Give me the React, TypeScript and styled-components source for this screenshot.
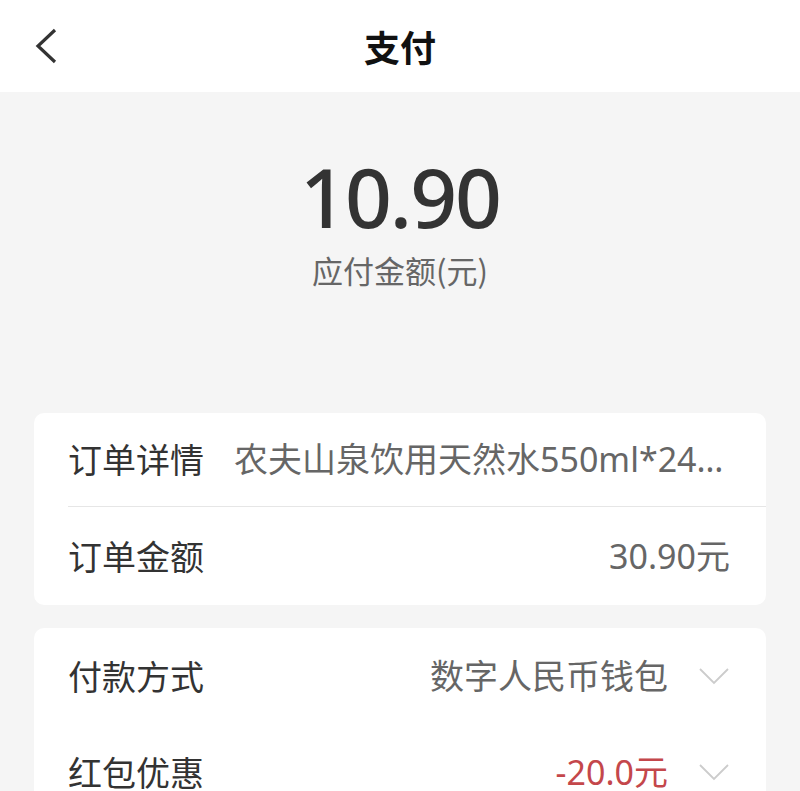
import React from "react";
import styled, { createGlobalStyle } from "styled-components";

const Global = createGlobalStyle`
  html, body { margin: 0; padding: 0; background: #f5f5f5; }
  body { font-family: "Noto Sans", "Noto Sans CJK SC", sans-serif; }
  * { box-sizing: border-box; }
`;

const Page = styled.div`
  width: 800px;
  min-height: 791px;
  background: #f5f5f5;
  display: flex;
  flex-direction: column;
`;

const Header = styled.header`
  height: 92px;
  background: #ffffff;
  display: grid;
  grid-template-columns: 92px 1fr 92px;
  align-items: center;
`;

const BackButton = styled.button`
  border: none;
  background: none;
  padding: 0 0 0 33px;
  height: 100%;
  display: flex;
  align-items: center;
  cursor: pointer;
`;

const Title = styled.h1`
  margin: 0;
  text-align: center;
  font-family: "Noto Sans CJK SC", sans-serif;
  font-size: 36px;
  font-weight: 700;
  color: #111;
  line-height: 1;
`;

const AmountBlock = styled.section`
  display: flex;
  flex-direction: column;
  align-items: center;
  padding: 55px 0 0;
  height: 321px;
`;

const Amount = styled.div`
  font-family: "Noto Sans", sans-serif;
  font-size: 82px;
  font-weight: 500;
  color: #333;
  line-height: 1.2;
  letter-spacing: -2px;
`;

const AmountLabel = styled.div`
  margin-top: 9px;
  font-family: "Noto Sans CJK SC", sans-serif;
  font-size: 31px;
  color: #666;
  line-height: 1;
`;

const Card = styled.div<{ $mt?: number }>`
  margin: ${(p) => p.$mt ?? 0}px 34px 0;
  background: #fff;
  border-radius: 10px;
  padding-left: 34px;
`;

const Row = styled.div<{ $divider?: boolean; $h: number }>`
  height: ${(p) => p.$h}px;
  display: flex;
  align-items: center;
  gap: 30px;
  padding-right: 36px;
  border-bottom: ${(p) => (p.$divider ? "1.5px solid #e6e6e6" : "none")};
`;

const Label = styled.span`
  flex: none;
  font-family: "Noto Sans CJK SC", sans-serif;
  font-size: 34px;
  color: #333;
  line-height: 1.3;
`;

const Value = styled.span<{ $color?: string; $truncate?: boolean; $left?: boolean }>`
  flex: 1;
  min-width: 0;
  text-align: ${(p) => (p.$left ? "left" : "right")};
  font-family: "Noto Sans", "Noto Sans CJK SC", sans-serif;
  font-size: 34px;
  color: ${(p) => p.$color ?? "#666"};
  white-space: nowrap;
  line-height: 1.3;
  ${(p) => (p.$truncate ? "overflow: hidden; text-overflow: ellipsis;" : "")}
`;

const Chevron = styled.svg`
  flex: none;
  width: 32px;
  height: 18px;
`;

const Down = () => (
  <Chevron viewBox="0 0 32 18">
    <path d="M2 2 L16 16 L30 2" fill="none" stroke="#cccccc" strokeWidth="1.8" />
  </Chevron>
);

export default function App() {
  return (
    <Page>
      <Global />
      <Header>
        <BackButton aria-label="back">
          <svg width="26" height="36" viewBox="0 0 26 36">
            <path d="M22 2 L5 18 L22 34" fill="none" stroke="#333" strokeWidth="3.2" />
          </svg>
        </BackButton>
        <Title>支付</Title>
        <div />
      </Header>
      <AmountBlock>
        <Amount>10.90</Amount>
        <AmountLabel>应付金额(元)</AmountLabel>
      </AmountBlock>
      <Card>
        <Row $h={94} $divider>
          <Label>订单详情</Label>
          <Value $left $truncate>农夫山泉饮用天然水550ml*24瓶整箱装</Value>
        </Row>
        <Row $h={98}>
          <Label>订单金额</Label>
          <Value>30.90元</Value>
        </Row>
      </Card>
      <Card $mt={23}>
        <Row $h={96}>
          <Label>付款方式</Label>
          <Value>数字人民币钱包</Value>
          <Down />
        </Row>
        <Row $h={96}>
          <Label>红包优惠</Label>
          <Value $color="#c4474b">-20.0元</Value>
          <Down />
        </Row>
      </Card>
    </Page>
  );
}
